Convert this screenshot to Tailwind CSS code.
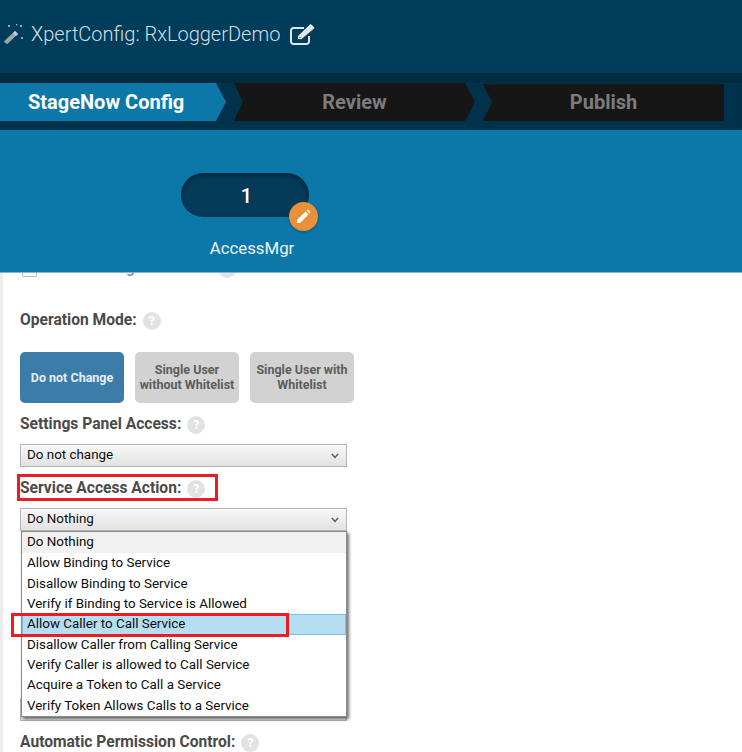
<!DOCTYPE html>
<html lang="en">
<head>
    <meta charset="UTF-8">
    <title>XpertConfig: RxLoggerDemo</title>
    <script src="https://cdn.jsdelivr.net/npm/@tailwindcss/browser@4"></script>
</head>
<body class="font-[Roboto,sans-serif] bg-white">
    <div class="w-[742px] h-[752px] flex flex-col overflow-hidden">
        <!-- title bar -->
        <div class="h-[73px] shrink-0 bg-[#003d5a] flex items-center pl-[4px] pb-[5px]">
            <svg class="w-[20px] h-[20px]" viewBox="0 0 20 20" fill="#9aa7ae">
                <path d="M.6 16.800 11 7l3 3L3.800 19.500a1.200 1.200 0 0 1-1.700 0L.6 18.400a1.200 1.200 0 0 1 0-1.600Z"/>
                <path d="M9 9 11 7l3 3-2 2Z" fill="#c8d0d4"/>
                <rect x="4" y="1" width="2" height="2"/><rect x="16" y="1" width="2" height="2"/><rect x="17" y="13" width="2" height="2"/><rect x="12" y="0" width="1.500" height="1.500"/>
            </svg>
            <span class="ml-[7px] text-[20px] font-light text-[#d5dde1]">XpertConfig: RxLoggerDemo</span>
            <svg class="ml-[10px] w-[26px] h-[23px]" viewBox="0 0 26 23" fill="none" stroke="#dfe6e9" stroke-width="2">
                <path d="M19 13v5.500a2.500 2.500 0 0 1-2.500 2.500h-13A2.500 2.500 0 0 1 1 18.500v-11A2.500 2.500 0 0 1 3.500 5H14"/>
                <path d="M7.500 16.500v-3.500L19.800 1.200a1.200 1.200 0 0 1 1.700 0l2.800 2.800a1.200 1.200 0 0 1 0 1.700L11.500 16.500Z" fill="#dfe6e9" stroke="#003d5a" stroke-width="0.800"/>
                <path d="M9.500 15v-1.500l1.500 1.500Z" fill="#003d5a" stroke="none"/>
            </svg>
        </div>

        <!-- wizard steps -->
        <div class="h-[57px] shrink-0 bg-[#00324b] border-t-[10px] border-t-[#002c42] flex gap-[8px] pr-[18px]">
            <div class="w-[226px] h-[38px] bg-[#0b78a9] text-white text-[20px] font-bold flex items-center pl-[28px] [clip-path:polygon(0_0,216px_0,100%_50%,216px_100%,0_100%)]">StageNow Config</div>
            <div class="w-[241px] h-[38px] bg-[#161616] text-[#7c7c7c] text-[20px] font-bold flex items-center justify-center [clip-path:polygon(0_0,231px_0,100%_50%,231px_100%,0_100%,9px_50%)]">Review</div>
            <div class="flex-1 h-[38px] bg-[#161616] text-[#7c7c7c] text-[20px] font-bold flex items-center justify-center [clip-path:polygon(0_1px,100%_1px,100%_100%,0_100%,9px_50%)]">Publish</div>
        </div>

        <!-- selected step tile -->
        <div class="relative z-10 h-[143px] shrink-0 bg-[#0b78a9] flex flex-col items-center w-full pr-[252px] border-b border-b-[#7fb4cf]">
            <div class="relative mt-[43px] w-[128px] h-[44px] rounded-[22px] bg-[#033b58] shadow-[inset_0_2px_5px_rgba(0,0,0,0.4)] flex items-center justify-center text-white text-[20px] font-medium pt-[1px] pl-[3px]">
                1
                <div class="absolute right-[-9px] bottom-[-14px] w-[29px] h-[29px] rounded-full bg-[#e8913a] shadow-[0_1px_3px_rgba(0,0,0,0.3)] flex items-center justify-center">
                    <svg class="w-[15px] h-[15px]" viewBox="0 0 15 15" fill="#fff">
                        <path d="M1 11 9.500 2.500l3 3L4 14H1Z"/>
                        <path d="M10.500 1.500l.6-.6a1 1 0 0 1 1.400 0l1.600 1.600a1 1 0 0 1 0 1.400l-.6.6Z"/>
                    </svg>
                </div>
            </div>
            <span class="mt-[19px] ml-[14px] text-[16.8px] leading-[24px] text-[#eef6fa]">AccessMgr</span>
        </div>

        <!-- form, scrolled under the header -->
        <div class="relative flex-1 overflow-hidden border-l-[3px] border-l-[#ececec] pl-[17px]">
            <div class="-mt-[13px] flex items-center h-[18px] text-[15.6px] font-medium text-[#8a8a8a]">
                <span class="ml-[2px] w-[15px] h-[15px] border border-[#bbb] rounded-[2px] mr-[12px]"></span>
                <span>Save setting for re-use</span>
                <span class="ml-[12px] w-[17px] h-[17px] rounded-full bg-[#e2e2e2]"></span>
            </div>

            <div class="mt-[33px] flex items-center h-[20px] text-[15.6px] font-bold text-[#4a4a4a]">
                Operation Mode:
                <span class="ml-[6px] w-[18px] h-[18px] rounded-full bg-[#e2e2e2] text-white text-[13px] font-bold flex items-center justify-center">?</span>
            </div>

            <div class="mt-[21px] flex gap-[11px]">
                <div class="w-[104px] h-[51px] rounded-[5px] bg-[#3b7da8] text-[#e6eff5] text-[12.5px] font-bold flex items-center justify-center text-center leading-[15px]">Do not Change</div>
                <div class="w-[104px] h-[51px] rounded-[5px] bg-[#d2d2d2] text-[#5c5c5c] text-[12.5px] font-bold flex items-center justify-center text-center leading-[15px] pb-[1px]">Single User<br>without Whitelist</div>
                <div class="w-[104px] h-[51px] rounded-[5px] bg-[#d2d2d2] text-[#5c5c5c] text-[12.5px] font-bold flex items-center justify-center text-center leading-[15px] pb-[1px]">Single User with<br>Whitelist</div>
            </div>

            <div class="mt-[12px] flex items-center h-[20px] text-[15.6px] font-bold text-[#4a4a4a]">
                Settings Panel Access:
                <span class="ml-[6px] w-[18px] h-[18px] rounded-full bg-[#e2e2e2] text-white text-[13px] font-bold flex items-center justify-center">?</span>
            </div>

            <div class="mt-[9px] w-[327px] h-[23px] border border-[#b5b5b5] bg-gradient-to-b from-[#f8f8f8] to-[#e2e2e2] flex items-center justify-between pl-[6px] pr-[7px] text-[13.4px] font-normal text-[#0c0c0c]">
                Do not change
                <svg class="w-[8px] h-[6px]" viewBox="0 0 8 6" fill="none" stroke="#555" stroke-width="1.300"><path d="M1 1l3 3.500L7 1"/></svg>
            </div>

            <div class="mt-[12px] flex items-center h-[20px] text-[15.6px] font-bold text-[#4a4a4a]">
                Service Access Action:
                <span class="ml-[6px] w-[18px] h-[18px] rounded-full bg-[#e2e2e2] text-white text-[13px] font-bold flex items-center justify-center">?</span>
            </div>

            <div class="mt-[9px] w-[327px] h-[23px] border border-[#b5b5b5] bg-gradient-to-b from-[#f8f8f8] to-[#e2e2e2] flex items-center justify-between pl-[6px] pr-[7px] text-[13.4px] font-normal text-[#0c0c0c]">
                Do Nothing
                <svg class="w-[8px] h-[6px]" viewBox="0 0 8 6" fill="none" stroke="#555" stroke-width="1.300"><path d="M1 1l3 3.500L7 1"/></svg>
            </div>

            <div class="mt-[167px] w-[327px] h-[23px] border border-[#b5b5b5] bg-[#e2e2e2]"></div>

            <div class="mt-[12px] flex items-center h-[20px] text-[15.6px] font-bold text-[#4a4a4a]">
                Automatic Permission Control:
                <span class="ml-[6px] w-[18px] h-[18px] rounded-full bg-[#e2e2e2] text-white text-[13px] font-bold flex items-center justify-center">?</span>
            </div>

            <!-- open dropdown list -->
            <div class="absolute left-[18px] top-[258px] w-[326px] h-[186px] border border-[#8a8a8a] bg-white shadow-[2px_2px_3px_rgba(0,0,0,0.55)] text-[13.4px] font-normal text-[#0c0c0c]">
                <div class="h-[21px] pl-[5px] pb-[1px] flex items-center bg-[#f1f1f1]">Do Nothing</div>
                <div class="h-[20.4px] pl-[5px] flex items-center">Allow Binding to Service</div>
                <div class="h-[20.4px] pl-[5px] flex items-center">Disallow Binding to Service</div>
                <div class="h-[20.4px] pl-[5px] flex items-center">Verify if Binding to Service is Allowed</div>
                <div class="h-[20.4px] pl-[4px] flex items-center bg-[#b5def2] border border-[#7cc0e6]">Allow Caller to Call Service</div>
                <div class="h-[20.4px] pl-[5px] flex items-center">Disallow Caller from Calling Service</div>
                <div class="h-[20.4px] pl-[5px] flex items-center">Verify Caller is allowed to Call Service</div>
                <div class="h-[20.4px] pl-[5px] flex items-center">Acquire a Token to Call a Service</div>
                <div class="h-[20.4px] pl-[5px] flex items-center">Verify Token Allows Calls to a Service</div>
            </div>

            <!-- red callouts -->
            <div class="absolute left-[14px] top-[201px] w-[201px] h-[27px] border-[3px] border-[#ed1c24]"></div>
            <div class="absolute left-[8px] top-[340px] w-[278px] h-[24px] border-[3px] border-[#ed1c24]"></div>
        </div>
    </div>
</body>
</html>
